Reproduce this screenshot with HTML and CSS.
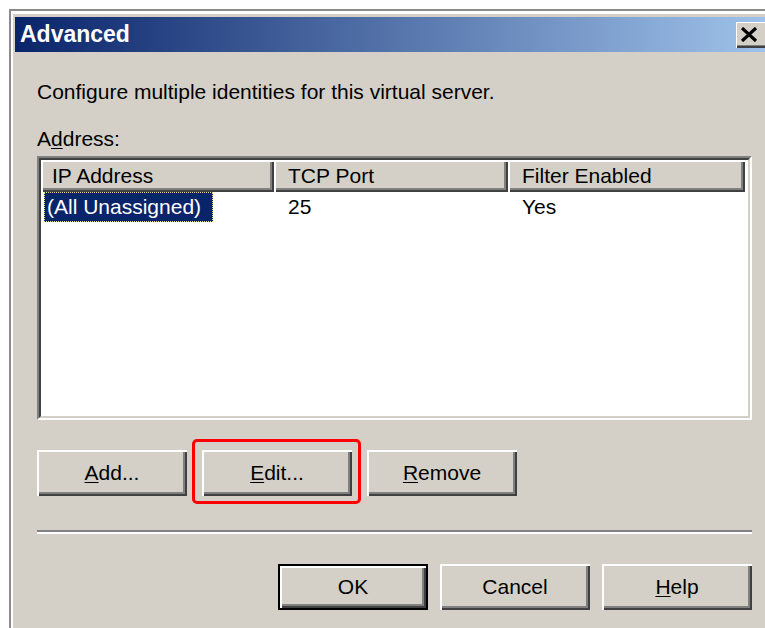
FILE: index.html
```html
<!DOCTYPE html>
<html lang="en">
<head>
<meta charset="utf-8">
<title>Advanced</title>
<link rel="stylesheet" href="styles.css">
</head>
<body>
<div class="window">
  <div class="titlebar">
    <span class="title">Advanced</span>
    <button class="close" aria-label="Close">
      <svg width="18" height="15" viewBox="0 0 18 15"><path d="M2 1 L16 14 M16 1 L2 14" stroke="#000" stroke-width="3.2" fill="none"/></svg>
    </button>
  </div>
  <div class="content">
    <p class="desc">Configure multiple identities for this virtual server.</p>
    <div class="label">A<u>d</u>dress:</div>
    <div class="listbox">
      <div class="listbox-inner">
        <div class="lv-header">
          <div class="lv-col first">IP Address</div>
          <div class="lv-col">TCP Port</div>
          <div class="lv-col">Filter Enabled</div>
        </div>
        <div class="lv-row">
          <div class="lv-cell first"><span class="sel">(All Unassigned)</span></div>
          <div class="lv-cell">25</div>
          <div class="lv-cell">Yes</div>
        </div>
      </div>
    </div>
    <div class="btn-row">
      <button class="btn"><u>A</u>dd...</button>
      <button class="btn marked"><u>E</u>dit...</button>
      <button class="btn"><u>R</u>emove</button>
    </div>
    <div class="separator"></div>
    <div class="btn-row end">
      <button class="btn default">OK</button>
      <button class="btn">Cancel</button>
      <button class="btn"><u>H</u>elp</button>
    </div>
  </div>
</div>
</body>
</html>
```
FILE: styles.css
```css
html, body {
  margin: 0;
  padding: 0;
  overflow: hidden;
  background: #fff;
  width: 765px;
  height: 628px;
}

body {
  font-family: "Liberation Sans", Arial, sans-serif;
  font-size: 21px;
  color: #000;
}

.window {
  margin: 9px 0 0 9px;
  width: 756px;
  height: 619px;
  box-sizing: border-box;
  overflow: hidden;
  background: #d4d0c8;
  border-top: 2px solid #8c8c8c;
  border-left: 2px solid #8c8c8c;
  box-shadow: inset 2px 3px 0 #fff;
  padding: 6px 0 0 4px;
}

.titlebar {
  height: 35px;
  display: flex;
  align-items: center;
  background: linear-gradient(to right, #0a246a, #a6caf0 105%);
  padding-left: 5px;
}

.title {
  flex: 1;
  color: #fff;
  font-weight: bold;
  font-size: 23px;
  line-height: 35px;
}

.close {
  width: 29px;
  height: 26px;
  margin-right: 0;
  padding: 0 0 0 4px;
  border: 0;
  background: #d4d0c8;
  box-shadow: inset 1px 1px 0 #fff, inset 0 -2px 0 #404040, inset 0 -3px 0 #808080;
  display: flex;
  align-items: center;
  justify-content: flex-start;
}

.close svg {
  display: block;
  margin-top: -1px;
}

.content {
  padding: 28px 0 0 22px;
  width: 715px;
}

.desc {
  margin: 0;
  line-height: 24px;
}

.label {
  margin-top: 23px;
  line-height: 24px;
}

u {
  text-decoration-thickness: 1px;
  text-underline-offset: 2px;
}

.listbox {
  margin-top: 5px;
  width: 715px;
  height: 264px;
  box-sizing: border-box;
  border: 2px solid;
  border-color: #808080 #fff #fff #808080;
}

.listbox-inner {
  height: 100%;
  box-sizing: border-box;
  border: 2px solid;
  border-color: #404040 #d4d0c8 #d4d0c8 #404040;
  background: #fff;
}

.lv-header,
.lv-row {
  display: grid;
  grid-template-columns: 233px 234px 237px;
}

.lv-col {
  height: 32px;
  line-height: 32px;
  background: #d4d0c8;
  padding-left: 14px;
  box-shadow: inset 2px 2px 0 #fff, inset -2px -2px 0 #404040, inset -4px -4px 0 #808080;
  white-space: nowrap;
}

.lv-col.first {
  padding-left: 11px;
}

.lv-cell {
  height: 30px;
  line-height: 30px;
  padding-left: 14px;
  white-space: nowrap;
}

.lv-cell.first {
  padding-left: 3px;
}

.sel {
  display: inline-block;
  background: #0a246a;
  color: #fff;
  padding: 0 12px 0 3px;
  line-height: 30px;
  outline: 1px dotted #e8d898;
  outline-offset: -1px;
}

.btn-row {
  display: flex;
  gap: 15px;
  margin-top: 30px;
}

.btn-row.end {
  justify-content: flex-end;
  gap: 12px;
  margin-top: 30px;
}

.btn {
  width: 150px;
  height: 46px;
  border: 0;
  padding: 0;
  font: inherit;
  color: #000;
  background: #d4d0c8;
  box-shadow: inset 2px 2px 0 #fff, inset -2px -2px 0 #404040, inset -4px -4px 0 #808080;
}

.btn.default {
  box-shadow: inset 0 0 0 2px #000, inset 4px 4px 0 #fff, inset -4px -4px 0 #404040, inset -6px -6px 0 #808080;
}

.marked {
  position: relative;
}

/* red highlight drawn around the Edit button */
.marked::after {
  content: "";
  position: absolute;
  left: -10px;
  top: -11px;
  right: -9px;
  bottom: -8px;
  border: 3px solid #f00;
  border-radius: 5px;
  pointer-events: none;
}

.separator {
  margin-top: 34px;
  height: 2px;
  background: #808080;
  border-bottom: 2px solid #fff;
}
```
